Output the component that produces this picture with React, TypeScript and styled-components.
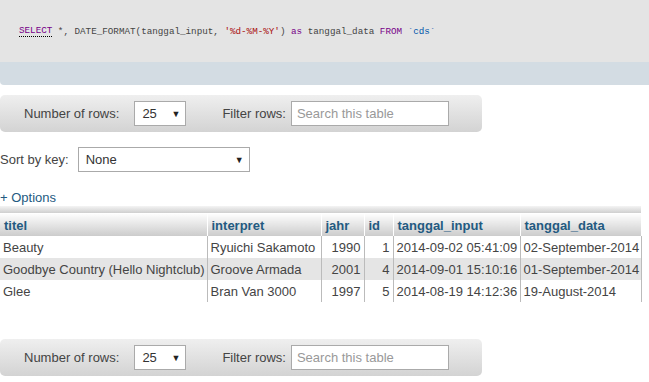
import React from "react";
import styled, { createGlobalStyle } from "styled-components";

const Global = createGlobalStyle`
  html, body { margin: 0; padding: 0; background: #fff; }
  body { font-family: "Liberation Sans", Arial, sans-serif; font-size: 13px; color: #444; }
`;

const Page = styled.div`
  width: 649px;
  display: flex;
  flex-direction: column;
  align-items: flex-start;
`;

const SqlBox = styled.div`
  width: 100%;
  height: 62px;
  background: #e4e4e4;
  display: flex;
  align-items: center;
  padding-left: 19px;
  box-sizing: border-box;
  font-family: "Liberation Mono", "Courier New", monospace;
  font-size: 9.25px;
  color: #444;
  white-space: pre;
`;

const Tok = styled.span<{ $c?: string; $u?: boolean }>`
  color: ${(p) => p.$c || "#444"};
  ${(p) => (p.$u ? "border-bottom: 1px dotted #000;" : "")}
`;

const Band = styled.div`
  width: 100%;
  height: 23px;
  background: #d3dce3;
  border-bottom-left-radius: 4px;
`;

const Toolbar = styled.div<{ $mt: number }>`
  margin-top: ${(p) => p.$mt}px;
  width: 482px;
  height: 37px;
  box-sizing: border-box;
  border-radius: 5px;
  background: linear-gradient(#efefef, #d3d3d3);
  display: flex;
  align-items: center;
  padding-left: 24px;
  color: #444;
`;

const Label = styled.span<{ $ml?: number; $mr?: number }>`
  margin-left: ${(p) => p.$ml || 0}px;
  margin-right: ${(p) => p.$mr || 0}px;
`;

const Select = styled.div<{ $w: number }>`
  width: ${(p) => p.$w}px;
  height: 25px;
  box-sizing: border-box;
  background: #fff;
  border: 1px solid #aaa;
  display: flex;
  align-items: center;
  justify-content: space-between;
  padding: 0 5px 0 7px;
  color: #333;
  font-size: 13px;
`;

const Arrow = styled.span`
  font-size: 9px;
  color: #222;
`;

const Search = styled.div`
  width: 158px;
  height: 25px;
  box-sizing: border-box;
  background: #fff;
  border: 1px solid #aaa;
  display: flex;
  align-items: center;
  padding-left: 5px;
  color: #999;
`;

const SortRow = styled.div`
  margin-top: 15px;
  display: flex;
  align-items: center;
  gap: 9px;
`;

const Options = styled.div`
  margin-top: 18px;
  height: 16px;
  line-height: 16px;
  color: #235a81;
`;

const TopBar = styled.div`
  width: 641px;
  height: 7px;
  background: linear-gradient(#f4f4f4, #cfcfcf);
  border-bottom: 1px solid #fff;
`;

const Table = styled.table`
  width: 641px;
  table-layout: fixed;
  border-collapse: collapse;
  font-size: 13px;
`;

const Th = styled.th`
  text-align: left;
  font-weight: bold;
  color: #235a81;
  height: 22px;
  padding: 0 4px;
  background: linear-gradient(#fdfdfd, #cccccc);
  border-left: 1px solid #fff;
  white-space: nowrap;
  overflow: hidden;
  &:first-child { border-left: none; }
`;

const Tr = styled.tr<{ $odd: boolean }>`
  background: ${(p) => (p.$odd ? "#e5e5e5" : "#fff")};
`;

const Td = styled.td<{ $right?: boolean }>`
  height: 22px;
  padding: 0 3px 0 3px;
  text-align: ${(p) => (p.$right ? "right" : "left")};
  border-left: 1px solid #bbb;
  white-space: nowrap;
  overflow: hidden;
  color: #444;
  &:first-child { border-left: none; }
  &:last-child { border-right: 1px solid #bbb; }
`;

const cols = [207, 114, 43, 29, 127, 121];
const headers = ["titel", "interpret", "jahr", "id", "tanggal_input", "tanggal_data"];
const rows = [
  ["Beauty", "Ryuichi Sakamoto", "1990", "1", "2014-09-02 05:41:09", "02-September-2014"],
  ["Goodbye Country (Hello Nightclub)", "Groove Armada", "2001", "4", "2014-09-01 15:10:16", "01-September-2014"],
  ["Glee", "Bran Van 3000", "1997", "5", "2014-08-19 14:12:36", "19-August-2014"],
];

const NavBar = ({ mt }: { mt: number }) => (
  <Toolbar $mt={mt}>
    <Label $mr={15}>Number of rows:</Label>
    <Select $w={52}>
      25<Arrow>▼</Arrow>
    </Select>
    <Label $ml={36} $mr={5}>Filter rows:</Label>
    <Search>Search this table</Search>
  </Toolbar>
);

export default function App() {
  return (
    <Page>
      <Global />
      <SqlBox>
        <Tok $c="#770088" $u>SELECT</Tok>
        <Tok> *, DATE_FORMAT(tanggal_input, </Tok>
        <Tok $c="#aa1111">'%d-%M-%Y'</Tok>
        <Tok>) </Tok>
        <Tok $c="#770088">as</Tok>
        <Tok> tanggal_data </Tok>
        <Tok $c="#770088">FROM</Tok>
        <Tok> </Tok>
        <Tok $c="#0055aa">`cds`</Tok>
      </SqlBox>
      <Band />
      <NavBar mt={10} />
      <SortRow>
        <span>Sort by key:</span>
        <Select $w={172}>
          None<Arrow>▼</Arrow>
        </Select>
      </SortRow>
      <Options>+ Options</Options>
      <TopBar />
      <Table>
        <colgroup>
          {cols.map((w, i) => (
            <col key={i} style={{ width: w }} />
          ))}
        </colgroup>
        <thead>
          <tr>
            {headers.map((h) => (
              <Th key={h}>{h}</Th>
            ))}
          </tr>
        </thead>
        <tbody>
          {rows.map((r, i) => (
            <Tr key={i} $odd={i % 2 === 1}>
              {r.map((c, j) => (
                <Td key={j} $right={j === 2 || j === 3}>
                  {c}
                </Td>
              ))}
            </Tr>
          ))}
        </tbody>
      </Table>
      <NavBar mt={37} />
    </Page>
  );
}
